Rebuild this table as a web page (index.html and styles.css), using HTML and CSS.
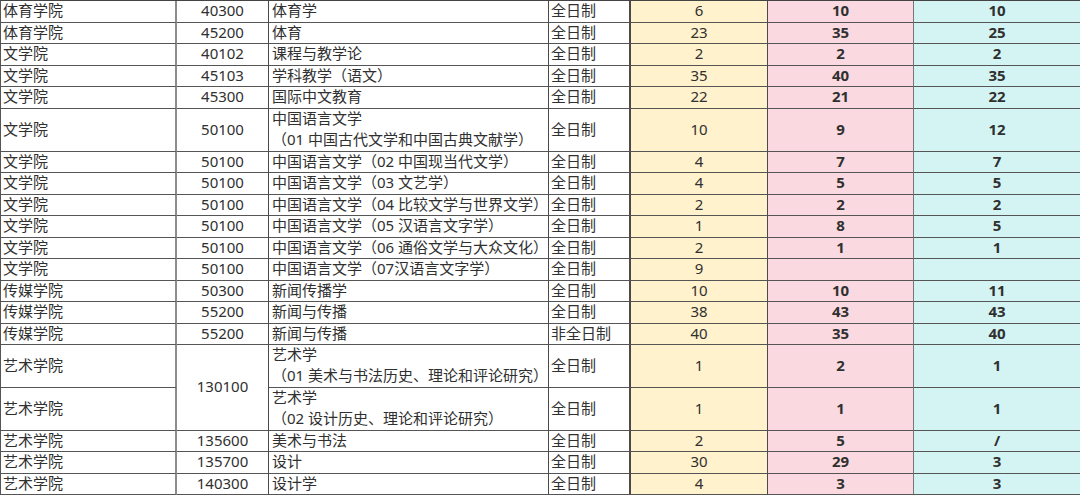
FILE: index.html
```html
<!DOCTYPE html>
<html lang="zh">
<head>
<meta charset="utf-8">
<link rel="stylesheet" href="styles.css">
</head>
<body>
<div class="sheet">
  <div class="row"><div class="cell school">体育学院</div><div class="cell code">40300</div><div class="cell major">体育学</div><div class="cell mode">全日制</div><div class="cell na">6</div><div class="cell nb">10</div><div class="cell nc">10</div></div>
  <div class="row"><div class="cell school">体育学院</div><div class="cell code">45200</div><div class="cell major">体育</div><div class="cell mode">全日制</div><div class="cell na">23</div><div class="cell nb">35</div><div class="cell nc">25</div></div>
  <div class="row"><div class="cell school">文学院</div><div class="cell code">40102</div><div class="cell major">课程与教学论</div><div class="cell mode">全日制</div><div class="cell na">2</div><div class="cell nb">2</div><div class="cell nc">2</div></div>
  <div class="row"><div class="cell school">文学院</div><div class="cell code">45103</div><div class="cell major">学科教学（语文）</div><div class="cell mode">全日制</div><div class="cell na">35</div><div class="cell nb">40</div><div class="cell nc">35</div></div>
  <div class="row"><div class="cell school">文学院</div><div class="cell code">45300</div><div class="cell major">国际中文教育</div><div class="cell mode">全日制</div><div class="cell na">22</div><div class="cell nb">21</div><div class="cell nc">22</div></div>
  <div class="row"><div class="cell school">文学院</div><div class="cell code">50100</div><div class="cell major two">中国语言文学<br>（01 中国古代文学和中国古典文献学）</div><div class="cell mode">全日制</div><div class="cell na">10</div><div class="cell nb">9</div><div class="cell nc">12</div></div>
  <div class="row"><div class="cell school">文学院</div><div class="cell code">50100</div><div class="cell major">中国语言文学（02 中国现当代文学）</div><div class="cell mode">全日制</div><div class="cell na">4</div><div class="cell nb">7</div><div class="cell nc">7</div></div>
  <div class="row"><div class="cell school">文学院</div><div class="cell code">50100</div><div class="cell major">中国语言文学（03 文艺学）</div><div class="cell mode">全日制</div><div class="cell na">4</div><div class="cell nb">5</div><div class="cell nc">5</div></div>
  <div class="row"><div class="cell school">文学院</div><div class="cell code">50100</div><div class="cell major">中国语言文学（04 比较文学与世界文学）</div><div class="cell mode">全日制</div><div class="cell na">2</div><div class="cell nb">2</div><div class="cell nc">2</div></div>
  <div class="row"><div class="cell school">文学院</div><div class="cell code">50100</div><div class="cell major">中国语言文学（05 汉语言文字学）</div><div class="cell mode">全日制</div><div class="cell na">1</div><div class="cell nb">8</div><div class="cell nc">5</div></div>
  <div class="row"><div class="cell school">文学院</div><div class="cell code">50100</div><div class="cell major">中国语言文学（06 通俗文学与大众文化）</div><div class="cell mode">全日制</div><div class="cell na">2</div><div class="cell nb">1</div><div class="cell nc">1</div></div>
  <div class="row"><div class="cell school">文学院</div><div class="cell code">50100</div><div class="cell major">中国语言文学（07汉语言文字学）</div><div class="cell mode">全日制</div><div class="cell na">9</div><div class="cell nb"></div><div class="cell nc"></div></div>
  <div class="row"><div class="cell school">传媒学院</div><div class="cell code">50300</div><div class="cell major">新闻传播学</div><div class="cell mode">全日制</div><div class="cell na">10</div><div class="cell nb">10</div><div class="cell nc">11</div></div>
  <div class="row"><div class="cell school">传媒学院</div><div class="cell code">55200</div><div class="cell major">新闻与传播</div><div class="cell mode">全日制</div><div class="cell na">38</div><div class="cell nb">43</div><div class="cell nc">43</div></div>
  <div class="row"><div class="cell school">传媒学院</div><div class="cell code">55200</div><div class="cell major">新闻与传播</div><div class="cell mode">非全日制</div><div class="cell na">40</div><div class="cell nb">35</div><div class="cell nc">40</div></div>
  <div class="row"><div class="cell school">艺术学院</div><div class="cell code span2">130100</div><div class="cell major two">艺术学<br>（01 美术与书法历史、理论和评论研究）</div><div class="cell mode">全日制</div><div class="cell na">1</div><div class="cell nb">2</div><div class="cell nc">1</div></div>
  <div class="row"><div class="cell school">艺术学院</div><div class="cell major two">艺术学<br>（02 设计历史、理论和评论研究）</div><div class="cell mode">全日制</div><div class="cell na">1</div><div class="cell nb">1</div><div class="cell nc">1</div></div>
  <div class="row"><div class="cell school">艺术学院</div><div class="cell code">135600</div><div class="cell major">美术与书法</div><div class="cell mode">全日制</div><div class="cell na">2</div><div class="cell nb">5</div><div class="cell nc">/</div></div>
  <div class="row"><div class="cell school">艺术学院</div><div class="cell code">135700</div><div class="cell major">设计</div><div class="cell mode">全日制</div><div class="cell na">30</div><div class="cell nb">29</div><div class="cell nc">3</div></div>
  <div class="row"><div class="cell school">艺术学院</div><div class="cell code">140300</div><div class="cell major">设计学</div><div class="cell mode">全日制</div><div class="cell na">4</div><div class="cell nb">3</div><div class="cell nc">3</div></div>
</div>
</body>
</html>
```

FILE: styles.css
```css
html, body {
  margin: 0;
  padding: 0;
  background: #ffffff;
}

.sheet {
  width: 1080px;
  box-sizing: border-box;
  display: grid;
  grid-template-columns: 176px 92px 280px 82px 137px 146px 167px;
  grid-template-rows:
    repeat(5, 21.5px)
    43px
    repeat(9, 21.5px)
    42.75px 42.75px
    repeat(3, 21.5px);
  border-top: 1px solid #444444;
  border-left: 1px solid #555555;
  font-family: "Noto Sans", "Noto Sans CJK SC", sans-serif;
  font-size: 15px;
  color: #303030;
}

.row {
  display: contents;
}

.cell {
  box-sizing: border-box;
  display: flex;
  align-items: center;
  border-right: 1px solid #4a4a4a;
  border-bottom: 1px solid #555555;
  padding: 0 0 1px 3px;
  line-height: 21px;
  white-space: nowrap;
  overflow: hidden;
}

.cell.school {
  border-right: 2px solid #8c8c8c;
  padding-left: 2px;
}

.cell.code {
  justify-content: center;
  padding-left: 0;
}

.cell.span2 {
  grid-row: span 2;
}

.cell.major {
  padding-left: 3px;
}

.cell.major.two {
  line-height: 21px;
}

.cell.mode {
  padding-left: 2px;
  border-right-width: 2px;
}

.cell.na {
  background: #fff2cc;
  justify-content: center;
  padding-left: 0;
}

.cell.nb {
  background: #fadae0;
  justify-content: center;
  font-weight: bold;
  padding-left: 0;
  border-right-color: #777777;
}

.cell.nc {
  background: #d4f4f3;
  justify-content: center;
  font-weight: bold;
  padding-left: 0;
}
```
